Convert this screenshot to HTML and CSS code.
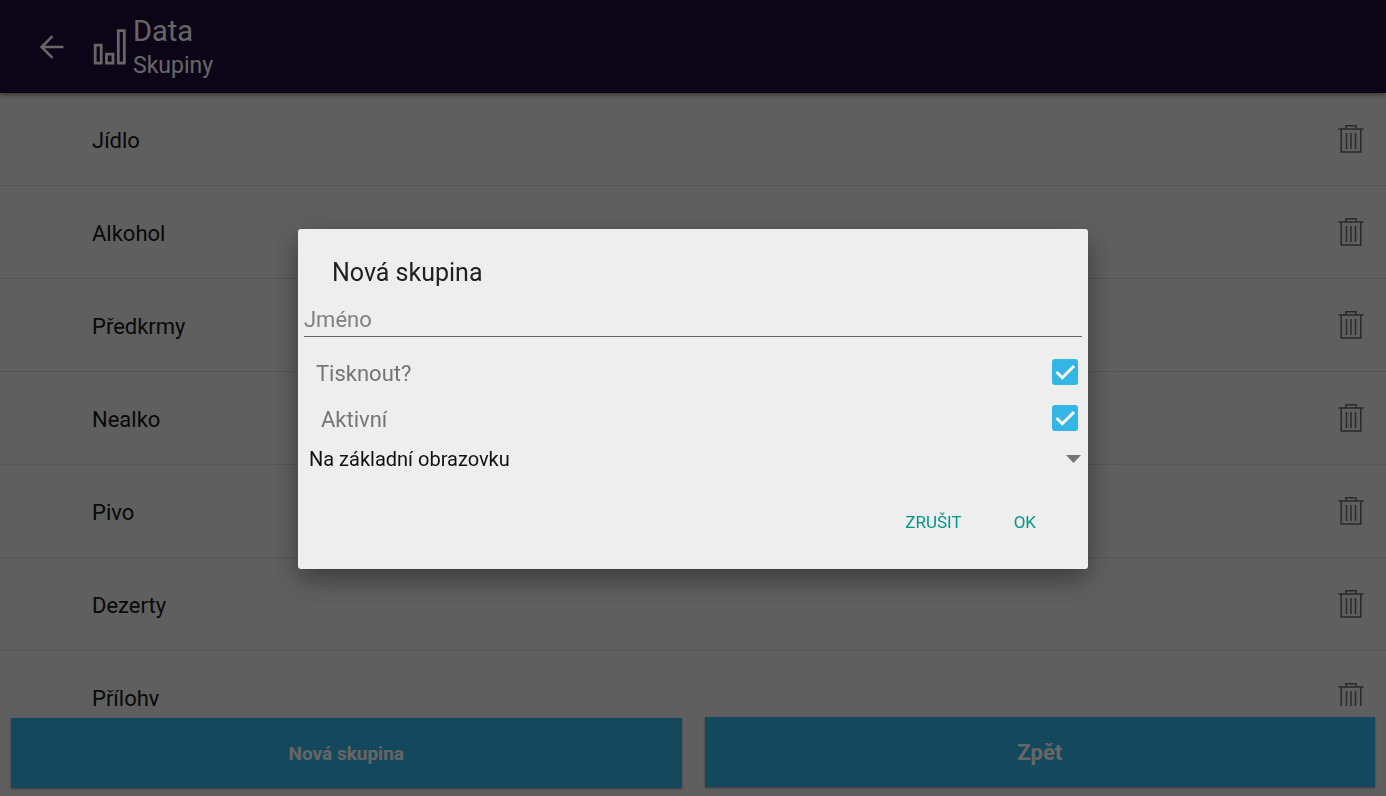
FILE: index.html
```html
<!DOCTYPE html>
<html lang="cs">
<head>
<meta charset="utf-8">
<meta name="viewport" content="width=device-width, initial-scale=1">
<title>Data – Skupiny</title>
<link rel="stylesheet" href="styles.css">
</head>
<body>
<svg class="sprite" aria-hidden="true">
  <symbol id="trash" viewBox="0 0 26 30">
    <path d="M0.5 5H25.5M8 5V1.7H18V5M3.2 5V28H22.8V5M8.5 9V25M13 9V25M17.5 9V25" fill="none" stroke="currentColor" stroke-width="1.5"/>
  </symbol>
</svg>
<div class="app">
  <header class="topbar">
    <button class="back" type="button" aria-label="Zpět">
      <svg width="24" height="24" viewBox="0 0 24 24"><path d="M23.5 12H2M12.5 1.2L1.7 12L12.5 22.8" fill="none" stroke="currentColor" stroke-width="2.6"/></svg>
    </button>
    <svg class="chart" width="33" height="36" viewBox="0 0 33 36" aria-hidden="true"><path d="M2.2 16.2H8.2V34.2H2.2ZM13.5 25.2H20V34.2H13.5ZM25.3 1.7H31.3V34.2H25.3Z" fill="none" stroke="currentColor" stroke-width="2.8"/></svg>
    <div class="heading">
      <h1 class="title">Data</h1>
      <p class="subtitle">Skupiny</p>
    </div>
  </header>
  <ul class="groups">
    <li class="group"><span class="label">Jídlo</span><button class="delete" type="button" aria-label="Smazat Jídlo"><svg class="bin"><use href="#trash"/></svg></button></li>
    <li class="group"><span class="label">Alkohol</span><button class="delete" type="button" aria-label="Smazat Alkohol"><svg class="bin"><use href="#trash"/></svg></button></li>
    <li class="group"><span class="label">Předkrmy</span><button class="delete" type="button" aria-label="Smazat Předkrmy"><svg class="bin"><use href="#trash"/></svg></button></li>
    <li class="group"><span class="label">Nealko</span><button class="delete" type="button" aria-label="Smazat Nealko"><svg class="bin"><use href="#trash"/></svg></button></li>
    <li class="group"><span class="label">Pivo</span><button class="delete" type="button" aria-label="Smazat Pivo"><svg class="bin"><use href="#trash"/></svg></button></li>
    <li class="group"><span class="label">Dezerty</span><button class="delete" type="button" aria-label="Smazat Dezerty"><svg class="bin"><use href="#trash"/></svg></button></li>
    <li class="group"><span class="label">Přílohy</span><button class="delete" type="button" aria-label="Smazat Přílohy"><svg class="bin"><use href="#trash"/></svg></button></li>
  </ul>
  <footer class="actions">
    <button class="action" type="button">Nová skupina</button>
    <button class="action action-large" type="button">Zpět</button>
  </footer>
</div>
<div class="overlay">
  <form class="dialog" role="dialog" aria-modal="true" aria-labelledby="dialog-title">
    <h2 class="dialog-title" id="dialog-title">Nová skupina</h2>
    <input class="name" type="text" placeholder="Jméno" aria-label="Jméno">
    <div class="option">
      <label class="label" for="print">Tisknout?</label>
      <span class="check"><input class="box" id="print" type="checkbox" checked><svg class="tick" viewBox="0 0 26 26" aria-hidden="true"><path d="M4.5 13L10.3 18.7L22 7"/></svg></span>
    </div>
    <div class="option option-active">
      <label class="label" for="active">Aktivní</label>
      <span class="check"><input class="box" id="active" type="checkbox" checked><svg class="tick" viewBox="0 0 26 26" aria-hidden="true"><path d="M4.5 13L10.3 18.7L22 7"/></svg></span>
    </div>
    <div class="spinner">
      <select class="screen" aria-label="Obrazovka"><option>Na základní obrazovku</option></select>
      <svg class="caret" width="15" height="8" viewBox="0 0 15 8" aria-hidden="true"><path d="M0 0H15L7.5 8Z" fill="currentColor"/></svg>
    </div>
    <div class="buttons">
      <button class="flat" type="button">ZRUŠIT</button>
      <button class="flat" type="button">OK</button>
    </div>
  </form>
</div>
</body>
</html>
```
FILE: styles.css
```css
* { box-sizing: border-box; }
body {
  margin: 0;
  font-family: Roboto, "Noto Sans", sans-serif;
  background: #eee;
}
h1, h2, p, ul { margin: 0; padding: 0; font-weight: 400; }
button, input, select { font: inherit; border: 0; padding: 0; background: none; }
.sprite { display: none; }

.app {
  display: flex;
  flex-direction: column;
  height: 100vh;
  overflow: hidden;
}
.topbar {
  display: flex;
  align-items: center;
  flex: none;
  height: 93px;
  padding-left: 40px;
  color: #fff;
  background: #200c3a;
  box-shadow: 0 1px 6px rgba(0, 0, 0, .6);
  z-index: 1;
}
.back { display: flex; color: inherit; margin-right: 29px; }
.chart { margin-right: 7px; }
.heading { padding-top: 5px; }
.title { font-size: 29px; line-height: 34px; }
.subtitle { font-size: 23px; line-height: 36px; }

.groups { flex: 1; min-height: 0; overflow: hidden; list-style: none; }
.group {
  display: flex;
  align-items: center;
  justify-content: space-between;
  height: 93px;
  padding: 0 22px 0 92px;
  font-size: 22px;
  color: #151515;
  border-bottom: 1px solid #d6d6d6;
}
.label { padding-top: 2px; }
.delete { display: flex; color: #666; }
.bin { width: 26px; height: 30px; }

.actions {
  display: flex;
  align-items: baseline;
  gap: 23px;
  flex: none;
  padding: 11px 11px 8px;
}
.action {
  flex: 1;
  height: 70px;
  font-size: 19px;
  font-weight: 700;
  color: #fff;
  background: #33b5e5;
  box-shadow: 0 1px 2px rgba(0, 0, 0, .4);
}
.action-large { font-size: 22px; }

.overlay {
  position: fixed;
  inset: 0;
  z-index: 2;
  display: flex;
  align-items: center;
  justify-content: center;
  padding-top: 2px;
  background: rgba(0, 0, 0, .6);
}
.dialog {
  width: 57%;
  min-width: 320px;
  padding: 24px 6px;
  color: #212121;
  background: #eee;
  border-radius: 3px;
  box-shadow: 0 10px 28px rgba(0, 0, 0, .4);
}
.dialog-title { padding: 0 28px; font-size: 25px; line-height: 40px; }
.name {
  display: block;
  width: 100%;
  height: 44px;
  margin-bottom: 12px;
  padding-top: 10px;
  font-size: 22px;
  border-bottom: 1px solid #666;
  border-radius: 0;
  outline: 0;
}
.name::placeholder { color: #808080; opacity: 1; }
.option {
  display: flex;
  align-items: center;
  justify-content: space-between;
  height: 46px;
  padding: 0 4px 0 12px;
  font-size: 22px;
  color: #757575;
}
.option-active { padding-left: 17px; }
.check { display: grid; }
.box, .tick { grid-area: 1 / 1; width: 26px; height: 26px; margin: 0; }
.box { appearance: none; border: 2px solid #757575; border-radius: 3px; }
.box:checked { background: #33b5e5; border-color: #33b5e5; }
.tick { pointer-events: none; fill: none; stroke: #fff; stroke-width: 3; visibility: hidden; }
.box:checked + .tick { visibility: visible; }
.spinner { display: grid; align-items: center; height: 36px; }
.screen, .caret { grid-area: 1 / 1; }
.screen {
  appearance: none;
  width: 100%;
  height: 36px;
  padding-left: 5px;
  font-size: 20px;
  color: #111;
}
.caret { justify-self: end; margin-right: 1px; color: #757575; pointer-events: none; }
.buttons { display: flex; justify-content: flex-end; gap: 12px; padding: 22px 26px 0; }
.flat { height: 46px; padding: 0 20px; font-size: 17px; color: #009688; }
```
